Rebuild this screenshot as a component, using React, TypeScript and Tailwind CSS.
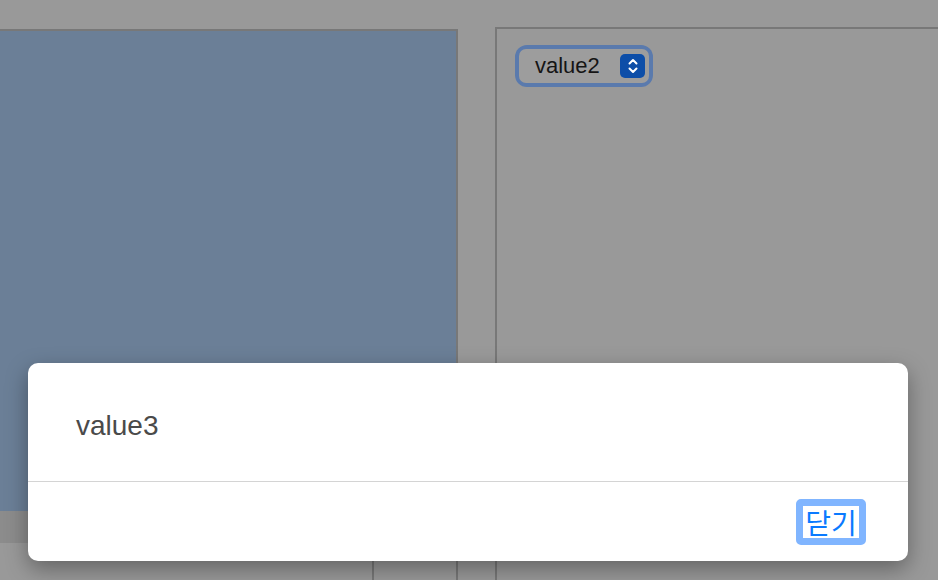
import React from "react";

export default function App() {
  return (
    <div
      className="relative w-[938px] h-[580px] overflow-hidden bg-[#999999]"
      style={{ fontFamily: '"Liberation Sans", Arial, "Noto Sans CJK KR", sans-serif' }}
    >
      <div className="flex h-full">
        {/* left panel */}
        <div className="mt-[29px] w-[458px] flex flex-col border-t-2 border-r-2 border-[#787878]">
          <div className="h-[480px] bg-[#6b7f97]" />
          <div className="h-[32px] bg-[#8c8c8c]" />
          <div className="flex flex-1">
            <div className="w-[374px] border-r-2 border-[#787878]" />
          </div>
        </div>
        {/* right panel */}
        <div className="ml-[37px] mt-[27px] flex-1 border-t-2 border-l-2 border-[#787878] pl-[18px] pt-[16px]">
          <div className="inline-flex rounded-[12px] bg-[#5a7aad] p-[4px]">
            <div className="flex h-[34px] w-[130px] items-center rounded-[7px] bg-[#9d9d9d] pl-[16px] pr-[4px]">
              <span className="text-[22px] leading-none text-[#151515]">value2</span>
              <span className="ml-auto flex h-[24px] w-[25px] items-center justify-center rounded-[5px] bg-[#0d4ea8]">
                <svg width="14" height="20" viewBox="0 0 14 20" fill="none" stroke="white" strokeWidth="2" strokeLinecap="round" strokeLinejoin="round">
                  <path d="M3.5 7.5 L7 4 L10.5 7.5" />
                  <path d="M3.5 12.5 L7 16 L10.5 12.5" />
                </svg>
              </span>
            </div>
          </div>
        </div>
      </div>

      {/* modal */}
      <div className="absolute left-[28px] top-[363px] flex h-[198px] w-[880px] flex-col rounded-[10px] bg-white shadow-[0_8px_22px_rgba(0,0,0,0.35)]">
        <div className="flex h-[118px] items-center pl-[48px] pt-[7px]">
          <span className="text-[28px] leading-none text-[#4a4a4a]">value3</span>
        </div>
        <div className="h-px bg-[#d4d4d4]" />
        <div className="flex flex-1 items-center justify-end pr-[42px]">
          <button
            className="flex h-[46px] w-[70px] items-center justify-center rounded-[5px] border-[7px] border-[#80b5ff] bg-white text-[28px] leading-none text-[#0a7aff]"
            style={{ fontFamily: '"Noto Sans CJK KR", sans-serif' }}
          >
            닫기
          </button>
        </div>
      </div>
    </div>
  );
}
